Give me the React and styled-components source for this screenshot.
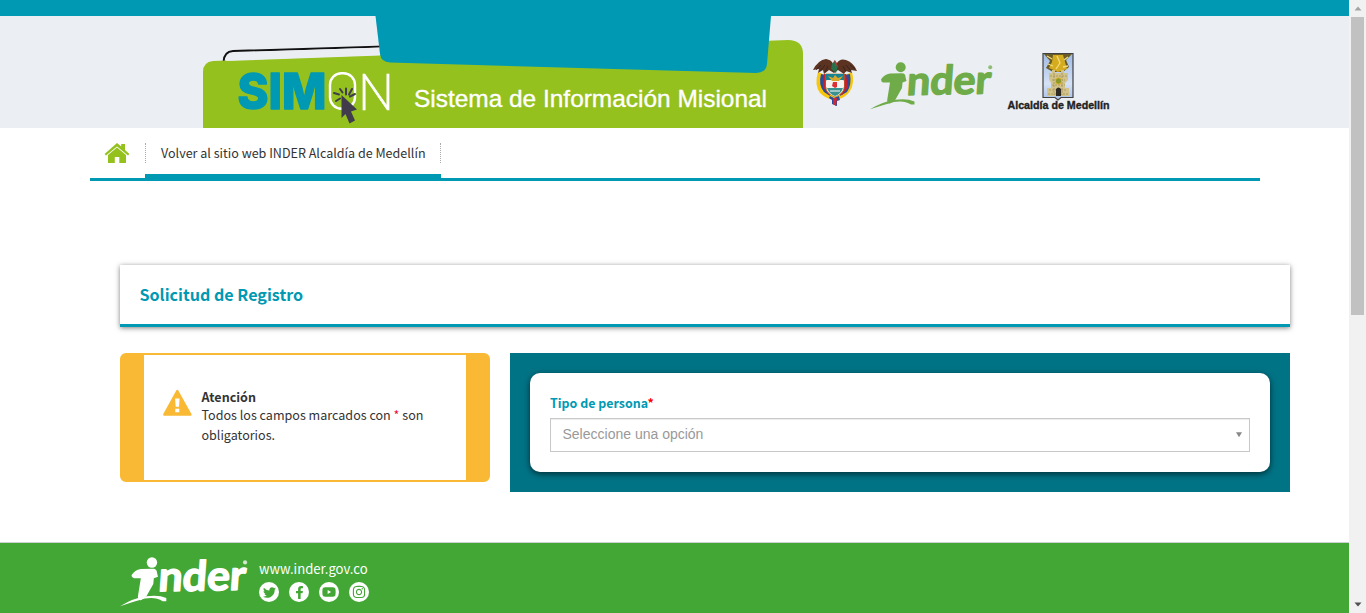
import React from "react";
import styled, { createGlobalStyle } from "styled-components";
import { FaTwitter, FaFacebookF, FaYoutube, FaInstagram } from "react-icons/fa";

const teal = "#0099b3";
const lime = "#95c11f";
const sans = '"Noto Sans CJK SC", "Noto Sans", sans-serif';

const Global = createGlobalStyle`
  * { box-sizing: border-box; }
  html, body { margin: 0; padding: 0; overflow: hidden; background: #fff; }
  body { font-family: ${sans}; font-size: 12.55px; color: #333; }
`;

const Screen = styled.div`
  display: flex;
  width: 1366px;
  height: 613px;
`;
const Page = styled.div`
  width: 1349px;
  display: flex;
  flex-direction: column;
`;
const TopBar = styled.div`
  height: 16px;
  background: ${teal};
`;
const Header = styled.header`
  height: 112px;
  padding-left: 203px;
  display: flex;
  background: #ebeef3;
`;
const Logos = styled.div`
  display: flex;
  align-items: flex-start;
  padding: 36px 0 0 9px;
`;
const CityLogo = styled.div`
  margin-left: 14px;
`;
const CountryLogo = styled.div`
  width: 46px;
  margin: 4px 12px 0 0;
`;
const BrandLogo = styled.div`
  margin-top: 10px;
  height: 50px;
`;

const Nav = styled.nav`
  width: 1170px;
  height: 53px;
  margin-left: 90px;
  display: flex;
  border-bottom: 3px solid ${teal};
`;
const HomeLink = styled.a`
  width: 55px;
  padding: 15px 0 0 14px;
`;
const NavTab = styled.a`
  width: 296px;
  height: 50px;
  padding-top: 15px;
  border-bottom: 4px solid ${teal};
`;
const NavLabel = styled.span`
  display: block;
  height: 20px;
  line-height: 20px;
  padding-left: 15px;
  white-space: nowrap;
  border-left: 1px dotted #aaa;
  border-right: 1px dotted #aaa;
`;

const Main = styled.main`
  width: 1170px;
  margin: 84px 0 0 120px;
  height: 277px;
`;
const TitlePanel = styled.section`
  height: 62px;
  padding-left: 19.5px;
  border-bottom: 3px solid ${teal};
  box-shadow: 0 1px 5px rgba(0, 0, 0, 0.5);
`;
const Title = styled.h1`
  margin: 0;
  font-size: 16.1px;
  line-height: 59px;
  font-weight: 700;
  color: ${teal};
`;
const Columns = styled.div`
  display: flex;
  align-items: flex-start;
  gap: 20px;
  margin-top: 26px;
`;
const Alert = styled.aside`
  width: 370px;
  height: 129px;
  display: flex;
  padding: 33px 20px 0 19px;
  border: solid #f9b934;
  border-width: 2px 24px;
  border-radius: 6px;
`;
const AlertText = styled.div`
  padding-left: 9.5px;
  line-height: 20px;
`;
const AlertTitle = styled.strong`
  display: block;
  line-height: 18px;
  height: 17px;
`;
const Required = styled.span`
  color: ${(p) => p.$color};
`;
const FormPanel = styled.section`
  width: 780px;
  height: 139px;
  padding: 20px;
  background: #007385;
`;
const Card = styled.div`
  height: 99px;
  padding: 20px;
  border-radius: 10px;
  background: #fff;
  box-shadow: 0 2px 6px rgba(0, 0, 0, 0.6);
`;
const Label = styled.label`
  display: block;
  height: 25px;
  line-height: 20px;
  font-size: 12.45px;
  font-weight: 700;
  color: ${teal};
`;
const Select = styled.div`
  height: 34px;
  display: flex;
  align-items: center;
  justify-content: space-between;
  padding: 0 6px 2px 11.5px;
  border: 1px solid #c8c8c8;
  box-shadow: inset 0 1px 1px rgba(0, 0, 0, 0.075);
  font: 14px "Liberation Sans", Arial, sans-serif;
  color: #999;
`;

const Footer = styled.footer`
  height: 71px;
  display: flex;
  padding: 14px 0 0 120px;
  border-top: 1px solid #ccd2cf;
  background: #43a735;
  color: #fff;
`;
const FooterInfo = styled.div`
  padding-left: 11px;
`;
const Site = styled.div`
  height: 25px;
  line-height: 23px;
  font-size: 13.1px;
`;
const Socials = styled.div`
  display: flex;
  gap: 10px;
`;
const Social = styled.a`
  width: 20px;
  height: 20px;
  display: flex;
  align-items: center;
  justify-content: center;
  border-radius: 50%;
  background: #fff;
  color: #43a735;
  font-size: ${(p) => p.$size || 13}px;
`;

const Scrollbar = styled.div`
  width: 17px;
  height: 613px;
  display: flex;
  flex-direction: column;
  align-items: center;
  background: #f1f1f1;
`;
const Thumb = styled.div`
  width: 13px;
  height: 298px;
  margin-bottom: auto;
  background: #c1c1c1;
`;
const ArrowBox = styled.div`
  height: 17px;
  display: flex;
  align-items: center;
`;
const Svg = styled.svg`
  display: block;
  flex: none;
  overflow: visible;
`;

const SimonBanner = () => (
  <Svg width="600" height="112" viewBox="203 16 600 112">
    <path d="M223.5 62 Q224 51.5 233 51L385 46.5" fill="none" stroke="#111" strokeWidth="2" />
    <path d="M203 128V72Q203 62 213 61L788 40Q803 40 803 54V128Z" fill={lime} />
    <path d="M226 61Q227 53 234 52.5L380 47.5V55.5Z" fill="#ebeef3" />
    <path d="M375.5 16H771L767 64Q766 73 756 73L390 62.5Q381 62 380 54Z" fill={teal} />
    <text x="237.5" y="109.3" fontFamily="Inter" fontWeight="800" fontSize="49" fill={teal} stroke={teal} strokeWidth="1.4" strokeLinejoin="round" textLength="89" lengthAdjust="spacingAndGlyphs">SIM</text>
    <rect x="330" y="73.3" width="25" height="35.5" rx="11.5" fill="none" stroke="#fff" strokeWidth="2.4" />
    <text x="358" y="109.5" fontFamily="Lato" fontWeight="300" fontSize="50.5" fill="#fff" stroke="#fff" strokeWidth=".6" textLength="36" lengthAdjust="spacingAndGlyphs">N</text>
    <path d="M334 93L339 94.5M336 101L340 98.5M340 89L342.5 92.5M346 94.5V88.5M349 94.5L352 89M350 96.5L355 94" stroke="#403c4b" strokeWidth="2" strokeLinecap="round" />
    <path d="M341.5 95L357 109.5L351 111.5L355 120.5L349.5 123.5L345.5 114L341.5 118Z" fill="#403c4b" />
    <text x="414" y="107.3" fontFamily="Liberation Sans" fontSize="24.5" fill="#fff" stroke="#fff" strokeWidth=".35" textLength="353" lengthAdjust="spacingAndGlyphs">Sistema de Información Misional</text>
  </Svg>
);

const InderLogo = ({ width, color }) => (
  <Svg width={width} height={(width * 48) / 123} viewBox="0 0 123 48" fill={color}>
    <circle cx="30.7" cy="5.3" r="5" />
    <path d="M11 17.5Q14 12.5 20 11.5L32 11.2Q35.5 11.5 35.5 15L36.5 19L32.5 20.5L32 26L25.5 37.5L20 41.5Q17 41.5 17.2 38L20 20.5L13.5 20.5Q11 20 11 17.5Z" />
    <path d="M0 47.3Q13 39.5 25 37.8Q37 36 44.5 39.5L44.5 42.5L41 42.5Q34 38 24 40Q13 43 0 47.3Z" />
    <text transform="translate(36.2 33) rotate(-1) skewX(-5)" fontFamily="Lato" fontWeight="700" fontSize="40" stroke={color} strokeWidth="1.4" strokeLinejoin="round" textLength="84" lengthAdjust="spacingAndGlyphs">nder</text>
    <circle cx="120.2" cy="5.2" r="2" opacity=".75" />
  </Svg>
);

const CoatOfArms = () => (
  <Svg width="46" height="51" viewBox="0 0 46 51">
    <path d="M6 16Q2 29 8 37Q14 43 23 44Q34 42 38 35Q43 27 40 16L33 19H13Z" fill="#f8c70c" />
    <path d="M9 18Q6 29 12 36L18 40L14 19ZM38 18Q40 29 35 36L28 40L32 19Z" fill="#294c9b" />
    <path d="M12 18L11 31L17 39H30L36 31L34 18Z" fill="#c9202d" />
    <path d="M14 18H32V32Q31 38 23 41Q15 38 14 32Z" fill="#f2f4ef" stroke="#ab8735" strokeWidth=".8" />
    <path d="M14 18H32V24H14Z" fill="#168394" />
    <path d="M16 20L21 22L23 19L26 22L31 20L27 25H20Z" fill="#d8a72a" />
    <path d="M14 25H32V31H14Z" fill="#f5f4ee" />
    <path d="M21 26H25V31L23 32L20 30Z" fill="#dd3037" />
    <path d="M15 32H31Q29 38 23 40Q17 38 15 32Z" fill="#39928e" />
    <path d="M18 35H28" stroke="#fff" strokeWidth="1" />
    <path d="M1 14Q6 4 14 3Q20 4 21 8L25 7Q28 2 34 4Q42 7 45 15L39 14L40 17L34 15L32 18L26 14L22 17L17 14L12 18L11 14L6 17L7 13Z" fill="#5b3320" />
    <path d="M4 14L9 9M8 15L13 9M13 16L16 10M31 10L34 16M34 9L39 15M38 9L43 13" stroke="#241e1d" strokeWidth=".7" />
    <path d="M20 8L23 4L26 10L24 17L19 13Z" fill="#28714b" />
    <path d="M22 4L25 7L24 11Z" fill="#d22c32" />
    <path d="M18 40L22 42L27 40L28 44L25 45V50L20 48V44L17 42Z" fill="#294c9b" />
    <path d="M21 42L25 42L24 50L21 48Z" fill="#d32730" />
  </Svg>
);

const MedellinLogo = () => (
  <Svg width="103" height="60" viewBox="0 0 103 60">
    <defs>
      <linearGradient id="sky" x1="0" y1="0" x2="0" y2="1">
        <stop offset="0" stopColor="#9fbbe5" />
        <stop offset=".65" stopColor="#d5e1f5" />
        <stop offset="1" stopColor="#a9c1e7" />
      </linearGradient>
    </defs>
    <path d="M36 1.5H66V45.5H54L51 48L48 45.5H36Z" fill="url(#sky)" stroke="#42413f" strokeWidth="1.2" />
    <path d="M37 2H65L59 8L62 15L56 20H46L39 16L43 9Z" fill="#6a5c26" />
    <path d="M46 3H56L58 10L60 17L51 20L42 16L45 10Z" fill="#d5ac20" />
    <path d="M50 4L53 11L49 17M41 12L46 14M57 8L61 5M40 4L45 7M56 15L61 14" stroke="#f3db79" strokeWidth="1.3" fill="none" />
    <path d="M42 21H45V18H48V21H54V18H57V21H61V28L58 31V36H62V44H40V36H44V31L42 27Z" fill="#d2c38b" />
    <path d="M43 24H60M45 28H58M45 33H58M42 38H60M41 42H61M47 21V43M55 21V43" stroke="#94804a" strokeWidth=".6" strokeDasharray="2 1" />
    <circle cx="51.5" cy="29" r="3.2" fill="#8b9a29" stroke="#e4b539" />
    <path d="M49 44V37Q51.5 34 54 37V44Z" fill="#2f2b24" />
    <text x="0.5" y="57" fontFamily="Liberation Sans" fontWeight="700" fontSize="10.8" fill="#222" stroke="#222" strokeWidth=".35" textLength="102" lengthAdjust="spacingAndGlyphs">Alcaldía de Medellín</text>
  </Svg>
);

const HomeIcon = () => (
  <Svg width="26" height="21" viewBox="0 0 26 21" fill={lime}>
    <path d="M13 0L17.2 3.6V1H21V7L25.4 11L24 12.6L13 3.4L2 12.6L.6 11Z" />
    <path d="M13 4.6L22 12.1V20H15.3V14H10.8V20H4V12.1Z" />
  </Svg>
);

const WarningIcon = () => (
  <Svg width="29" height="28" viewBox="0 0 29 28">
    <path d="M14.3 3L27.4 26.6H1.3Z" fill="#f9b934" stroke="#f9b934" strokeWidth="2.4" strokeLinejoin="round" />
    <path d="M12.1 10.5H16.6L16 18.7H12.7ZM12.3 20.7H16.3V24.2H12.3Z" fill="#fff" />
  </Svg>
);

const Arrow = ({ d, fill }) => (
  <Svg width="8" height="5" viewBox="0 0 8 5"><path d={d} fill={fill} /></Svg>
);

export default function App() {
  return (
    <Screen>
      <Global />
      <Page>
        <TopBar />
        <Header>
          <SimonBanner />
          <Logos>
            <CountryLogo><CoatOfArms /></CountryLogo>
            <BrandLogo><InderLogo width={123} color="#6fac49" /></BrandLogo>
            <CityLogo><MedellinLogo /></CityLogo>
          </Logos>
        </Header>
        <Nav>
          <HomeLink><HomeIcon /></HomeLink>
          <NavTab><NavLabel>Volver al sitio web INDER Alcaldía de Medellín</NavLabel></NavTab>
        </Nav>
        <Main>
          <TitlePanel><Title>Solicitud de Registro</Title></TitlePanel>
          <Columns>
            <Alert>
              <WarningIcon />
              <AlertText>
                <AlertTitle>Atención</AlertTitle>
                Todos los campos marcados con <Required $color="#e0113a">*</Required> son obligatorios.
              </AlertText>
            </Alert>
            <FormPanel>
              <Card>
                <Label>Tipo de persona<Required $color="#f00">*</Required></Label>
                <Select>
                  Seleccione una opción
                  <Arrow d="M1 .3H7L4 5.3Z" fill="#888" />
                </Select>
              </Card>
            </FormPanel>
          </Columns>
        </Main>
        <Footer>
          <InderLogo width={128} color="#fff" />
          <FooterInfo>
            <Site>www.inder.gov.co</Site>
            <Socials>
              <Social><FaTwitter /></Social>
              <Social><FaFacebookF /></Social>
              <Social $size={14}><FaYoutube /></Social>
              <Social $size={14}><FaInstagram /></Social>
            </Socials>
          </FooterInfo>
        </Footer>
      </Page>
      <Scrollbar>
        <ArrowBox><Arrow d="M4 0.5L7.5 4.5H.5Z" fill="#a3a3a3" /></ArrowBox>
        <Thumb />
        <ArrowBox><Arrow d="M.5 .5H7.5L4 4.5Z" fill="#505050" /></ArrowBox>
      </Scrollbar>
    </Screen>
  );
}
